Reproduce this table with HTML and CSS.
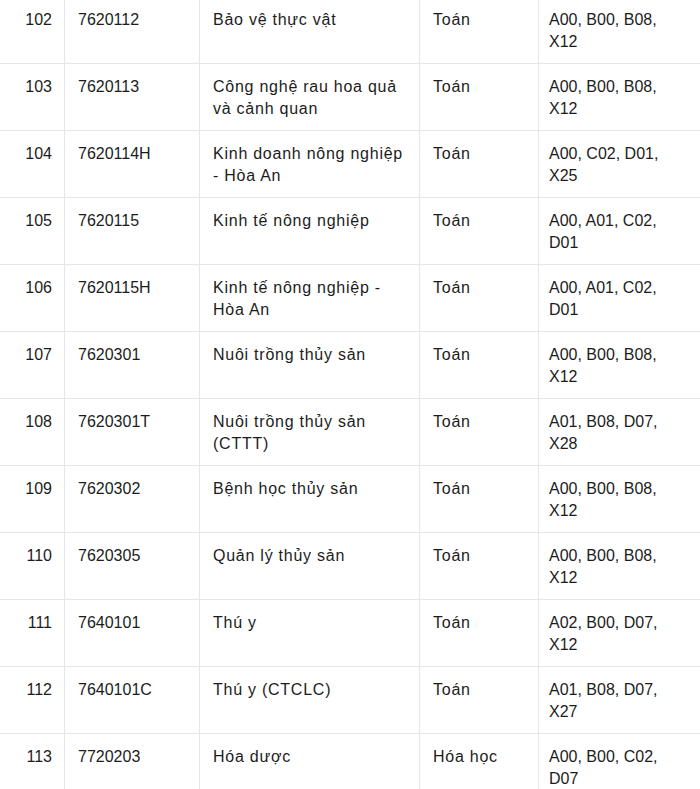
FILE: index.html
```html
<!DOCTYPE html>
<html lang="vi">
<head>
<meta charset="utf-8">
<link rel="stylesheet" href="styles.css">
</head>
<body>
<table class="majors">
<colgroup>
<col class="c-no"><col class="c-code"><col class="c-name"><col class="c-subj"><col class="c-combo">
</colgroup>
<tbody>
<tr><td class="no">102</td><td>7620112</td><td class="txt">Bảo vệ thực vật</td><td class="txt">Toán</td><td>A00, B00, B08, X12</td></tr>
<tr><td class="no">103</td><td>7620113</td><td class="txt">Công nghệ rau hoa quả và cảnh quan</td><td class="txt">Toán</td><td>A00, B00, B08, X12</td></tr>
<tr><td class="no">104</td><td>7620114H</td><td class="txt">Kinh doanh nông nghiệp - Hòa An</td><td class="txt">Toán</td><td>A00, C02, D01, X25</td></tr>
<tr><td class="no">105</td><td>7620115</td><td class="txt">Kinh tế nông nghiệp</td><td class="txt">Toán</td><td>A00, A01, C02, D01</td></tr>
<tr><td class="no">106</td><td>7620115H</td><td class="txt">Kinh tế nông nghiệp - Hòa An</td><td class="txt">Toán</td><td>A00, A01, C02, D01</td></tr>
<tr><td class="no">107</td><td>7620301</td><td class="txt">Nuôi trồng thủy sản</td><td class="txt">Toán</td><td>A00, B00, B08, X12</td></tr>
<tr><td class="no">108</td><td>7620301T</td><td class="txt">Nuôi trồng thủy sản (CTTT)</td><td class="txt">Toán</td><td>A01, B08, D07, X28</td></tr>
<tr><td class="no">109</td><td>7620302</td><td class="txt">Bệnh học thủy sản</td><td class="txt">Toán</td><td>A00, B00, B08, X12</td></tr>
<tr><td class="no">110</td><td>7620305</td><td class="txt">Quản lý thủy sản</td><td class="txt">Toán</td><td>A00, B00, B08, X12</td></tr>
<tr><td class="no">111</td><td>7640101</td><td class="txt">Thú y</td><td class="txt">Toán</td><td>A02, B00, D07, X12</td></tr>
<tr><td class="no">112</td><td>7640101C</td><td class="txt">Thú y (CTCLC)</td><td class="txt">Toán</td><td>A01, B08, D07, X27</td></tr>
<tr><td class="no">113</td><td>7720203</td><td class="txt">Hóa dược</td><td class="txt">Hóa học</td><td>A00, B00, C02, D07</td></tr>
</tbody>
</table>
</body>
</html>
```
FILE: styles.css
```css
html, body {
  margin: 0;
  padding: 0;
  background: #fff;
  overflow: hidden;
}
.majors {
  width: 700px;
  margin-top: -3px;
  table-layout: fixed;
  border-collapse: separate;
  border-spacing: 0;
  font-family: "Liberation Sans", Arial, sans-serif;
  font-size: 16px;
  line-height: 22px;
  color: #1c1c1c;
}
.c-no { width: 65px; }
.c-code { width: 135px; }
.c-name { width: 220px; }
.c-subj { width: 119px; }
.c-combo { width: 161px; }
.majors td {
  box-sizing: border-box;
  vertical-align: top;
  padding: 12px 12px 10px 13px;
  border-right: 1px solid #e6e6e6;
  border-bottom: 1px solid #e6e6e6;
  height: 67px;
}
.majors td.txt { letter-spacing: 0.75px; }
.majors td:last-child { border-right: none; padding-left: 10px; padding-right: 20px; }
.majors td.no { text-align: right; padding: 12px 12px 10px 4px; }
```
